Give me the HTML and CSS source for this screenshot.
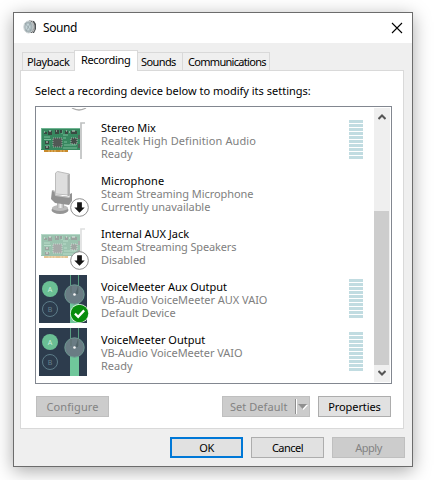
FILE: index.html
```html
<!DOCTYPE html>
<html lang="en">
<head>
<meta charset="utf-8">
<title>Sound</title>
<link rel="stylesheet" href="styles.css">
</head>
<body>
<svg class="defs" width="0" height="0" aria-hidden="true">
  <defs>
    <linearGradient id="metal" x1="0" x2="1"><stop offset="0" stop-color="#aaa"/><stop offset=".5" stop-color="#ededed"/><stop offset="1" stop-color="#a0a0a0"/></linearGradient>
    <symbol id="card" viewBox="0 0 48 48">
      <path d="M5 34h24v2H5z" fill="#c88a2c"/>
      <path d="M10 34v2M13 34v2M16 34v2M22 34v2M25 34v2" stroke="#f0d49a" stroke-width=".7"/>
      <path d="M2 12h39v22H2z" fill="#37875f"/>
      <path d="M2 12.500h39M2.500 13v20" stroke="#70b592" fill="none"/>
      <path d="M5 21h6M5 23.500h7M24 19h5M25 29h12M6 30h5M25 26h3M23 14v4M24 32h14M24 22h3" stroke="#8ccaa8" stroke-width=".8"/>
      <path d="M9 15h4v4H9zM16 14h4v4h-4zM21 14h2v3h-2zM5 16h3v2H5zM26 15h3v3h-3zM32 15h6v3h-6zM6 25h4v3H6zM6 30h4v3H6z" fill="#394a42"/>
      <path d="M10 15h2M17 15h1M27 15h1M33 15h3M7 26h2M7 31h2M5 16h1M30 16h1" stroke="#d1ddd5"/>
      <path d="M14 22h9v9h-9z" fill="#515855" stroke="#9caaa3" stroke-dasharray="1 1"/>
      <path d="M32 22h6v6h-6z" fill="#424d48" stroke="#a6b8ae" stroke-dasharray="1 1"/>
      <path d="M46 7h-4v36" fill="none" stroke="#bfc1c1" stroke-width="1.700"/>
      <path d="M39 19h2v4h-2zM39 28h2v4h-2z" fill="#545e59"/>
    </symbol>
    <symbol id="mic" viewBox="0 0 48 48">
      <ellipse cx="21" cy="41" rx="8.500" ry="4" fill="#959595"/>
      <ellipse cx="21" cy="39" rx="8" ry="3" fill="#bcbcbc"/>
      <path d="M18 33h7v6h-7z" fill="url(#metal)"/>
      <path d="M16.500 4l2-1.500 12 2.500v21l-14-1z" fill="#dedede" stroke="#bcbcbc"/>
      <path d="M28.500 6l2-1v22h-2z" fill="#adadad"/>
      <path d="M13 21l3 1 .5 4 14 2 .5-3 2-1v8l-3 4-14-2-4-4z" fill="#929292"/>
      <path d="M13 21.500l3 1 .5 4 14 2" stroke="#c6c6c6" fill="none"/>
    </symbol>
    <symbol id="down" viewBox="0 0 20 20">
      <circle cx="10" cy="10" r="9.300" fill="#fff" stroke="#8a8a8a"/>
      <path d="M7.500 4.500h5V10h3L10 15.500 4.500 10h3z" fill="#161616"/>
    </symbol>
    <symbol id="check" viewBox="0 0 20 20">
      <circle cx="10" cy="10" r="10" fill="#e8f5e9"/>
      <circle cx="10" cy="10" r="9.200" fill="#078c0c"/>
      <path d="M5.200 10.200l3.400 3.300 6.300-6.800" fill="none" stroke="#fff" stroke-width="2.400"/>
    </symbol>
    <symbol id="mixer" viewBox="0 0 48 48">
      <path d="M0 0h48v48H0z" fill="#2d3c4d"/>
      <circle cx="11" cy="14" r="8" fill="#6abf94"/>
      <circle cx="11" cy="34" r="7.500" fill="none" stroke="#5d7c89"/>
      <text class="glyph-a" x="11" y="16.500">A</text>
      <text class="glyph-b" x="11" y="36.500">B</text>
      <path d="M31.500 0v48M39.500 0v48" stroke="#579e80"/>
      <path d="M31 25h9v23h-9z" fill="#70c79b"/>
      <circle cx="35.500" cy="19.500" r="9.700" fill="#6a7c84" stroke="#6e9a92"/>
      <path d="M32 11v7M39 11v7" stroke="#5d716f"/><path d="M36 19l3-7v7z" fill="#53656b"/>
      <circle cx="35.500" cy="19.500" r="1.300" fill="#f5f5f5"/>
    </symbol>
  </defs>
</svg>
<main class="window">
  <header class="titlebar">
    <svg class="speaker" viewBox="0 0 14 16"><path d="M6 1.500l5 .5 2 3v5l-2 4H6z" fill="#4e5355"/><path d="M9 2l2 4v5l-2 3" stroke="#ccc" fill="none"/><ellipse cx="5.500" cy="8" rx="4.700" ry="6" fill="#a5b2b6" stroke="#d0d6d7"/><ellipse cx="5" cy="8" rx="2.500" ry="3.500" fill="#c4d2d6"/><path d="M2 4l6 8M8 3L3 12" stroke="#8a989c" stroke-width=".6"/></svg>
    <h1 class="title">Sound</h1>
    <svg class="close" viewBox="0 0 12 12"><path d="M1 1l10 10M11 1L1 11" stroke="#000" stroke-width="1.100"/></svg>
  </header>
  <nav class="tabs">
    <span class="tab playback">Playback</span><span class="tab active">Recording</span><span class="tab sounds">Sounds</span><span class="tab comms">Communications</span>
  </nav>
  <section class="panel">
    <p class="prompt">Select a recording device below to modify its settings:</p>
    <div class="list">
      <div class="devices">
        <svg class="peek" viewBox="0 0 16 3"><path d="M1 0q7 4 14 0" fill="none" stroke="#aaa" stroke-width="1.300"/></svg>
        <article class="device"><div class="icon"><svg><use href="#card"/></svg></div><div class="info"><b>Stereo Mix</b><span class="loose">Realtek High Definition Audio</span><span>Ready</span></div><i class="meter"></i></article>
        <article class="device"><div class="icon"><svg><use href="#mic"/></svg><svg class="badge"><use href="#down"/></svg></div><div class="info"><b class="loose">Microphone</b><span class="snug">Steam Streaming Microphone</span><span class="near">Currently unavailable</span></div></article>
        <article class="device"><div class="icon"><svg class="faded"><use href="#card"/></svg><svg class="badge"><use href="#down"/></svg></div><div class="info"><b class="near">Internal AUX Jack</b><span class="tight">Steam Streaming Speakers</span><span>Disabled</span></div></article>
        <article class="device"><div class="icon"><svg><use href="#mixer"/></svg><svg class="badge"><use href="#check"/></svg></div><div class="info"><b class="near">VoiceMeeter Aux Output</b><span class="near">VB-Audio VoiceMeeter AUX VAIO</span><span>Default Device</span></div><i class="meter"></i></article>
        <article class="device"><div class="icon"><svg><use href="#mixer"/></svg></div><div class="info"><b>VoiceMeeter Output</b><span class="snug">VB-Audio VoiceMeeter VAIO</span><span>Ready</span></div><i class="meter"></i></article>
      </div>
      <div class="scrollbar">
        <svg class="arrow" viewBox="0 0 8 6"><path d="M.5 5L4 1.500 7.500 5" fill="none" stroke="#555" stroke-width="2"/></svg>
        <div class="thumb"></div>
        <svg class="arrow" viewBox="0 0 8 6"><path d="M.5 1L4 4.500 7.500 1" fill="none" stroke="#555" stroke-width="2"/></svg>
      </div>
    </div>
    <div class="actions">
      <button class="btn off configure">Configure</button>
      <button class="btn off split"><span>Set Default</span><svg viewBox="0 0 13 15"><path d="M.5 0v15" stroke="#8f8f8f"/><path d="M1.500 0v15" stroke="#fff"/><path d="M4 6h9l-4.500 5z" fill="#fff"/><path d="M3 5h9l-4.500 5z" fill="#8f8f8f"/></svg></button>
      <button class="btn properties">Properties</button>
    </div>
  </section>
  <footer class="footer"><button class="btn ok">OK</button><button class="btn cancel">Cancel</button><button class="btn off apply">Apply</button></footer>
</main>
</body>
</html>
```
FILE: styles.css
```css
* { box-sizing: border-box; }
body { margin: 0; width: 439px; height: 480px; overflow: hidden; padding: 12px 0 0 13px; background: #fff; font: 11px/13px "Noto Sans", "Open Sans", sans-serif; color: #000; }
.defs { position: absolute; }
.window { width: 400px; height: 455px; border: 1px solid #6c6c6c; background: #efefef; box-shadow: 0 4px 17px rgba(0,0,0,.34); }
.titlebar { height: 30px; display: flex; align-items: center; padding: 0 9px; background: #fff; }
.speaker { width: 14px; height: 16px; margin-top: -2px; }
.title { margin: 0 auto 0 6px; font-size: 12px; font-weight: 400; line-height: 16px; letter-spacing: -.4px; }
.close { width: 12px; height: 12px; margin-top: -1px; }
.tabs { height: 28px; padding: 7px 0 0 8px; display: flex; align-items: flex-end; position: relative; z-index: 1; margin-bottom: -1px; }
.tab { height: 19px; border: 1px solid #d9d9d9; padding: 2px 0 0 4px; margin-right: -1px; white-space: nowrap; letter-spacing: -.35px; }
.playback { width: 53px; }
.tab.active { width: 64px; height: 21px; border-bottom: 0; background: #fff; padding-left: 6px; }
.sounds { width: 46px; padding-left: 3px; letter-spacing: -.6px; }
.comms { width: 88px; padding-left: 5px; letter-spacing: -.7px; }
.panel { margin-left: 6px; width: 384px; height: 359px; border: 1px solid #d9d9d9; background: #fff; padding: 13px 0 0 14px; }
.prompt { margin: 0; height: 22px; white-space: nowrap; }
.list { width: 357px; height: 278px; border: 1px solid #828790; display: flex; padding: 1px; }
.devices { width: 337px; padding-left: 2px; position: relative; }
.peek { position: absolute; left: 34px; top: 0; width: 16px; height: 3px; }
.device { height: 53px; display: flex; align-items: flex-start; }
.device:first-of-type { margin-top: 8px; }
.icon { width: 48px; height: 48px; position: relative; flex: none; }
.icon > svg { display: block; width: 48px; height: 48px; }
.icon > .badge { position: absolute; left: 31px; top: 29px; width: 19px; height: 19px; }
.icon > .faded { opacity: .5; }
.info { margin: 5px auto 0 14px; color: #808080; white-space: nowrap; }
.info b, .info span { display: block; font-weight: 400; }
.info b { color: #000; }
.loose { letter-spacing: .1px; }
.near { letter-spacing: -.035px; }
.snug { letter-spacing: -.065px; }
.tight { letter-spacing: -.15px; }
.meter { width: 14px; height: 39px; margin: 4px 11px 0 0; background: repeating-linear-gradient(#c1dce1 0 3px, #fff 3px 4px); }
.glyph-a, .glyph-b { font-size: 7px; text-anchor: middle; }
.glyph-a { fill: #cdf0dc; }
.glyph-b { fill: #66818d; }
.scrollbar { width: 16px; height: 274px; padding: 6px 1px 6px 0; background: #efefef; display: flex; flex-direction: column; align-items: center; }
.arrow { width: 8px; height: 6px; }
.thumb { width: 15px; height: 154px; margin: 91px 0 auto; background: #cdcdcd; }
.actions { display: flex; padding: 12px 0 0 1px; }
.btn { width: 73px; height: 21px; padding: 0; border: 1px solid #adadad; background: #e1e1e1; font: inherit; color: #000; }
.off { background: #ccc; border-color: #bfbfbf; color: #838383; }
.configure { letter-spacing: .1px; }
.split { width: 88px; margin: 0 8px 0 113px; display: flex; align-items: center; padding: 0 1px 0 7px; letter-spacing: .05px; }
.split svg { width: 13px; height: 15px; margin-left: auto; }
.properties { letter-spacing: -.1px; }
.footer { display: flex; gap: 8px; padding: 8px 0 0 156px; }
.footer .btn { letter-spacing: -.5px; }
.ok { border: 2px solid #0078d7; }
```
